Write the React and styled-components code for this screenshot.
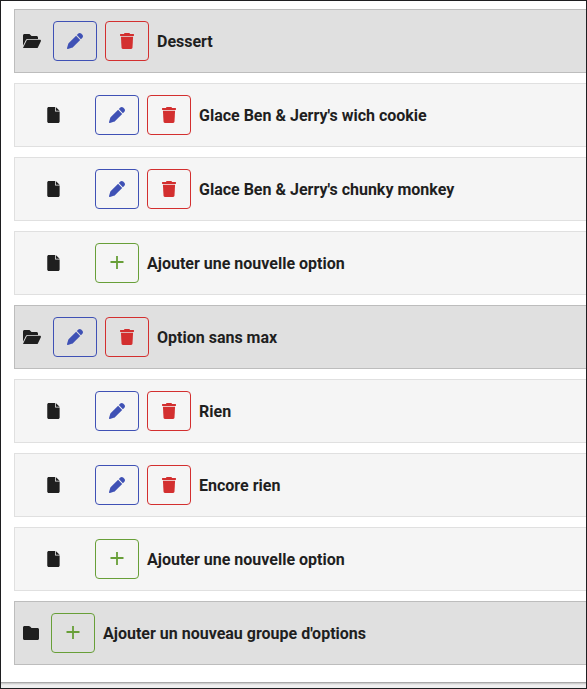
import React from "react";
import styled, { createGlobalStyle } from "styled-components";
import { FaPen } from "react-icons/fa6";

const GlobalStyle = createGlobalStyle`
  * {
    box-sizing: border-box;
  }

  body {
    margin: 0;
    background: #ffffff;
    color: #1f1f1f;
    font-family: Roboto, sans-serif;
    font-size: 16px;
  }
`;

const Page = styled.main`
  display: flex;
  flex-direction: column;
  height: 689px;
  border: 1px solid #1e1e20;
  overflow: hidden;
`;

const List = styled.div`
  display: flex;
  flex-direction: column;
  flex: 1;
  gap: 10px;
  padding: 8px 0 0 13px;
`;

const Row = styled.div`
  display: flex;
  align-items: center;
  height: 64px;
  padding-left: ${({ $group }) => ($group ? "8px" : "32px")};
  background: ${({ $group }) => ($group ? "#e0e0e0" : "#f5f5f5")};
  border: 1px solid ${({ $group }) => ($group ? "#bdbdbd" : "#e0e0e0")};
  border-right: none;
`;

const RowIcon = styled.span`
  display: flex;
  margin-right: ${({ $group }) => ($group ? "12px" : "35px")};
`;

const Button = styled.button`
  display: flex;
  align-items: center;
  justify-content: center;
  width: 44px;
  height: 40px;
  margin: 0 8px 0 0;
  padding: 0;
  color: ${({ $color }) => $color};
  background: transparent;
  border: 1px solid ${({ $color }) => $color};
  border-radius: 4px;
  cursor: pointer;
`;

const Label = styled.span`
  padding-top: 2px;
  font-weight: 700;
  line-height: 24px;
  white-space: nowrap;
`;

const Footer = styled.div`
  height: 6px;
  background: linear-gradient(
    #a9a9a9 0 1px,
    #cdcdcd 1px 2px,
    #e4e4e4 2px 3px,
    #efefef 3px
  );
`;

const FolderOpenIcon = () => (
  <svg width="18" height="16" viewBox="0 0 576 512" fill="currentColor">
    <path d="M147.8 192H480v-48c0-26.5-21.5-48-48-48H272l-64-64H48C21.5 32 0 53.5 0 80v328.4l90.5-181.1c10.9-21.7 32.9-35.3 57.3-35.3z" />
    <path d="M543.1 218H147.8c-12.1 0-23.2 6.8-28.6 17.7L0 480h447.1c12.1 0 23.2-6.9 28.6-17.7l96-196C582.2 245 566.7 218 543.1 218z" />
  </svg>
);

const FolderIcon = () => (
  <svg width="16" height="16" viewBox="0 0 512 512" fill="currentColor">
    <path d="M464 96H272l-45.3-45.3C214.7 38.7 198.5 32 181.5 32H48C21.5 32 0 53.5 0 80v352c0 26.5 21.5 48 48 48h416c26.5 0 48-21.5 48-48V144c0-26.5-21.5-48-48-48z" />
  </svg>
);

const FileIcon = () => (
  <svg width="13" height="16" viewBox="0 0 400 512" fill="currentColor">
    <path d="M272 0v120h124L272 0zM248 128V0H48C21.5 0 0 21.5 0 48v416c0 26.5 21.5 48 48 48h300c26.5 0 48-21.5 48-48V146H266c-10 0-18-8-18-18z" />
  </svg>
);

const TrashIcon = () => (
  <svg width="14" height="16" viewBox="0 0 448 512" fill="currentColor">
    <path d="M48 467c1.6 24.8 19 45 44 45h264c25 0 42.4-20.2 44-45l18-347H30l18 347z" />
    <path d="M432 32H320L308.4 8.8C305.7 3.4 300.2 0 294.1 0H153.9c-6.1 0-11.6 3.4-14.3 8.8L128 32H16C7.2 32 0 39.2 0 48v32c0 8.8 7.2 16 16 16h416c8.8 0 16-7.2 16-16V48c0-8.8-7.2-16-16-16z" />
  </svg>
);

const PlusIcon = () => (
  <svg width="14" height="16" viewBox="0 0 14 16">
    <path
      d="M7 1v13M.5 7h13"
      fill="none"
      stroke="currentColor"
      strokeWidth="1.8"
    />
  </svg>
);

const EditButtons = () => (
  <>
    <Button $color='#3f51b5' aria-label='Modifier'>
      <FaPen size={16} />
    </Button>
    <Button $color='#d32f2f' aria-label='Supprimer'>
      <TrashIcon />
    </Button>
  </>
);

const AddButton = () => (
  <Button $color='#689f38' aria-label='Ajouter'>
    <PlusIcon />
  </Button>
);

const groups = [
  {
    name: "Dessert",
    options: [
      "Glace Ben & Jerry's wich cookie",
      "Glace Ben & Jerry's chunky monkey",
    ],
  },
  { name: "Option sans max", options: ["Rien", "Encore rien"] },
];

const OptionRow = ({ label, children }) => (
  <Row>
    <RowIcon>
      <FileIcon />
    </RowIcon>
    {children}
    <Label>{label}</Label>
  </Row>
);

const App = () => {
  return (
    <Page>
      <GlobalStyle />
      <List>
        {groups.map((group) => (
          <React.Fragment key={group.name}>
            <Row $group>
              <RowIcon $group>
                <FolderOpenIcon />
              </RowIcon>
              <EditButtons />
              <Label>{group.name}</Label>
            </Row>
            {group.options.map((option) => (
              <OptionRow key={option} label={option}>
                <EditButtons />
              </OptionRow>
            ))}
            <OptionRow label='Ajouter une nouvelle option'>
              <AddButton />
            </OptionRow>
          </React.Fragment>
        ))}
        <Row $group>
          <RowIcon $group>
            <FolderIcon />
          </RowIcon>
          <AddButton />
          <Label>Ajouter un nouveau groupe d'options</Label>
        </Row>
      </List>
      <Footer />
    </Page>
  );
};

export default App;
